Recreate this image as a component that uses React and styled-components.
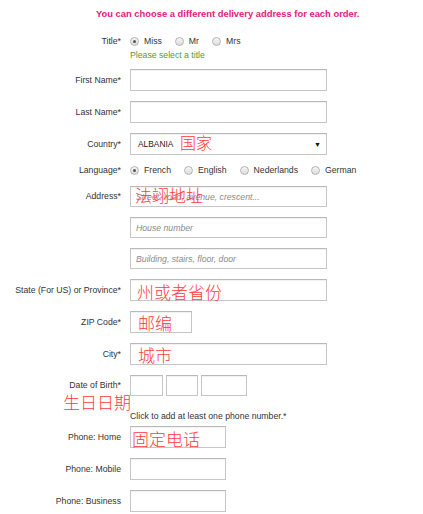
import React from "react";
import styled, { createGlobalStyle } from "styled-components";

const Global = createGlobalStyle`
  html, body { margin: 0; padding: 0; background: #fff; }
  body { font-family: "Liberation Sans", Arial, sans-serif; color: #333; }
  * { box-sizing: border-box; }
`;

const Page = styled.div`
  width: 423px;
  height: 514px;
  overflow: hidden;
  display: flex;
  flex-direction: column;
`;

const Header = styled.div`
  margin-top: 8px;
  padding-left: 96px;
  font-size: 9.4px;
  line-height: 11px;
  font-weight: bold;
  color: #e5197b;
  white-space: nowrap;
`;

const Row = styled.div`
  position: relative;
  display: grid;
  grid-template-columns: 121px auto;
  column-gap: 9px;
  align-items: center;
  margin-top: ${(p) => p.$mt}px;
`;

const Label = styled.div`
  text-align: right;
  font-size: 8.7px;
  line-height: 11px;
  color: #333;
  white-space: nowrap;
`;

const Fields = styled.div`
  display: flex;
  gap: ${(p) => p.$gap || 0}px;
  align-items: center;
`;

const Field = styled.div`
  position: relative;
  width: ${(p) => p.$w}px;
  height: ${(p) => p.$h || 22}px;
`;

const Input = styled.input`
  display: block;
  width: 100%;
  height: 100%;
  margin: 0;
  padding: 0 5px;
  border: 1px solid #c6c6c6;
  border-top-color: #b9b9b9;
  box-shadow: inset 0 1px 1px rgba(0, 0, 0, 0.06);
  background: #fff;
  font-family: "Liberation Sans", Arial, sans-serif;
  font-size: 8.7px;
  color: #333;
  outline: none;
  &::placeholder {
    color: #8a8a8a;
    font-style: italic;
  }
`;

const SelectBox = styled.div`
  display: flex;
  align-items: center;
  justify-content: space-between;
  width: 100%;
  height: 100%;
  padding: 0 5px 0 7px;
  border: 1px solid #c6c6c6;
  border-top-color: #b9b9b9;
  box-shadow: inset 0 1px 1px rgba(0, 0, 0, 0.06);
  font-size: 8.4px;
  color: #222;
`;

const Arrow = styled.span`
  font-size: 7px;
  color: #111;
`;

const Note = styled.span`
  position: absolute;
  left: ${(p) => p.$x}px;
  top: ${(p) => p.$y}px;
  font-family: "Noto Sans CJK SC", sans-serif;
  font-weight: 300;
  font-size: ${(p) => p.$s || 17}px;
  line-height: 1;
  color: #ff3b3b;
  white-space: nowrap;
  pointer-events: none;
`;

const Radios = styled.div`
  display: flex;
  align-items: center;
  gap: 13px;
  height: 12px;
`;

const Option = styled.label`
  display: flex;
  align-items: center;
  gap: 5px;
  font-size: 8.7px;
  line-height: 11px;
  color: #333;
  white-space: nowrap;
`;

const Dot = styled.span`
  position: relative;
  width: 9px;
  height: 9px;
  border-radius: 50%;
  border: 1px solid #b4b4b4;
  background: linear-gradient(#f6f6f6, #dcdcdc);
  &::after {
    content: "";
    display: ${(p) => (p.$on ? "block" : "none")};
    position: absolute;
    left: 2px;
    top: 2px;
    width: 3px;
    height: 3px;
    border-radius: 50%;
    background: #555;
  }
`;

const Hint = styled.div`
  font-size: 8.7px;
  line-height: 11px;
  color: ${(p) => p.$c || "#333"};
  white-space: nowrap;
`;

const Radio = ({ label, on }) => (
  <Option>
    <Dot $on={on} />
    {label}
  </Option>
);

export default function App() {
  return (
    <Page>
      <Global />
      <Header>You can choose a different delivery address for each order.</Header>

      <Row $mt={16}>
        <Label>Title*</Label>
        <Radios>
          <Radio label="Miss" on />
          <Radio label="Mr" />
          <Radio label="Mrs" />
        </Radios>
      </Row>
      <Row $mt={3}>
        <span />
        <Hint $c="#4f9a3e">Please select a title</Hint>
      </Row>

      <Row $mt={8}>
        <Label>First Name*</Label>
        <Field $w={197}><Input /></Field>
      </Row>
      <Row $mt={10}>
        <Label>Last Name*</Label>
        <Field $w={197}><Input /></Field>
      </Row>
      <Row $mt={10}>
        <Label>Country*</Label>
        <Field $w={197}>
          <SelectBox>
            <span>ALBANIA</span>
            <Arrow>▼</Arrow>
          </SelectBox>
          <Note $x={50} $y={1} $s={16}>国家</Note>
        </Field>
      </Row>
      <Row $mt={9}>
        <Label>Language*</Label>
        <Radios>
          <Radio label="French" on />
          <Radio label="English" />
          <Radio label="Nederlands" />
          <Radio label="German" />
        </Radios>
      </Row>
      <Row $mt={10}>
        <Label>Address*</Label>
        <Field $w={197} $h={21}>
          <Input placeholder="Street, road, avenue, crescent..." />
          <Note $x={5} $y={0}>法翊地址</Note>
        </Field>
      </Row>
      <Row $mt={10}>
        <span />
        <Field $w={197} $h={21}><Input placeholder="House number" /></Field>
      </Row>
      <Row $mt={10}>
        <span />
        <Field $w={197} $h={21}><Input placeholder="Building, stairs, floor, door" /></Field>
      </Row>
      <Row $mt={10}>
        <Label>State (For US) or Province*</Label>
        <Field $w={197}>
          <Input />
          <Note $x={7} $y={4}>州或者省份</Note>
        </Field>
      </Row>
      <Row $mt={10}>
        <Label>ZIP Code*</Label>
        <Field $w={62}>
          <Input />
          <Note $x={8} $y={3}>邮编</Note>
        </Field>
      </Row>
      <Row $mt={10}>
        <Label>City*</Label>
        <Field $w={197}>
          <Input />
          <Note $x={8} $y={3}>城市</Note>
        </Field>
      </Row>
      <Row $mt={10}>
        <Label>Date of Birth*</Label>
        <Fields $gap={3}>
          <Field $w={33} $h={21}><Input /></Field>
          <Field $w={32} $h={21}><Input /></Field>
          <Field $w={46} $h={21}><Input /></Field>
        </Fields>
        <Note $x={63} $y={18}>生日日期</Note>
      </Row>
      <Row $mt={15}>
        <span />
        <Hint>Click to add at least one phone number.*</Hint>
      </Row>
      <Row $mt={4}>
        <Label>Phone: Home</Label>
        <Field $w={96}>
          <Input />
          <Note $x={2} $y={4}>固定电话</Note>
        </Field>
      </Row>
      <Row $mt={10}>
        <Label>Phone: Mobile</Label>
        <Field $w={96}><Input /></Field>
      </Row>
      <Row $mt={10}>
        <Label>Phone: Business</Label>
        <Field $w={96}><Input /></Field>
      </Row>
    </Page>
  );
}
